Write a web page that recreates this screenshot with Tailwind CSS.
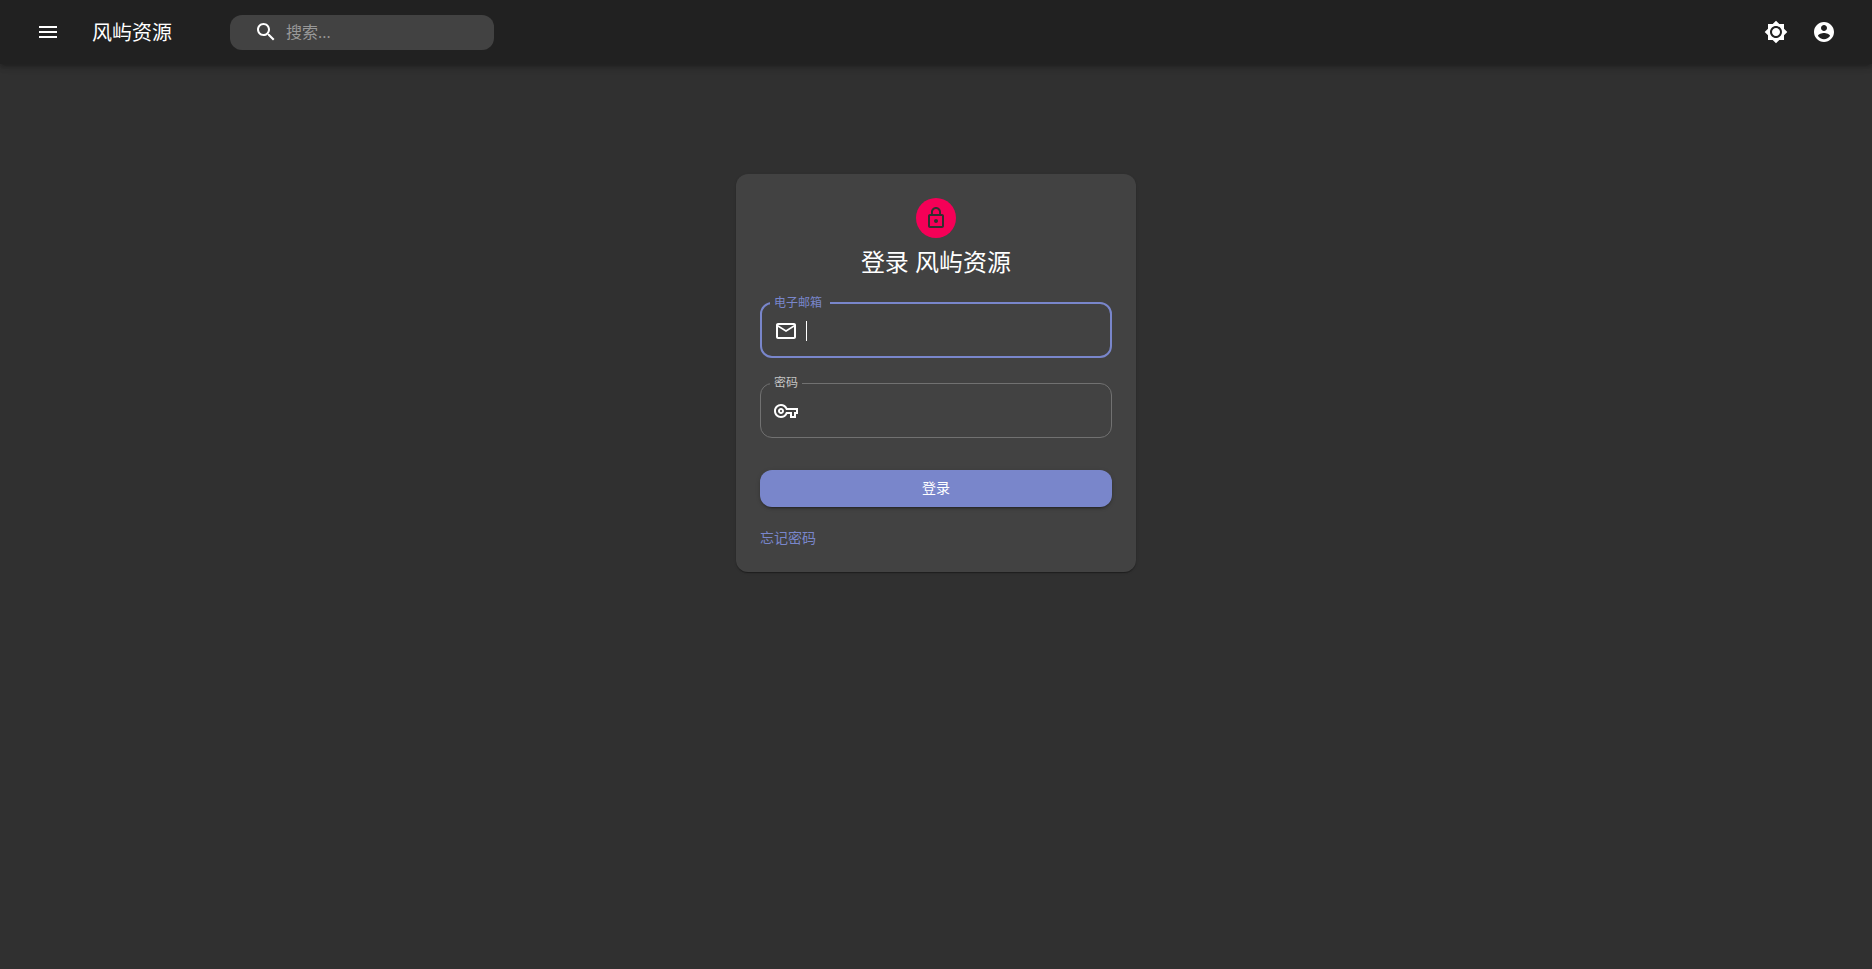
<!DOCTYPE html>
<html lang="zh-CN">
<head>
<meta charset="utf-8">
<meta name="viewport" content="width=device-width, initial-scale=1">
<title>登录 风屿资源</title>
<script src="https://cdn.jsdelivr.net/npm/@tailwindcss/browser@4"></script>
</head>
<body class="min-h-screen bg-[#303030] font-['Open_Sans','Noto_Sans_CJK_SC',sans-serif] text-white">
<header class="flex h-16 items-center bg-[#212121] pl-6 pr-6 shadow-[0_2px_4px_-1px_rgba(0,0,0,0.2),0_4px_5px_0_rgba(0,0,0,0.14),0_1px_10px_0_rgba(0,0,0,0.12)]">
  <button type="button" aria-label="菜单" class="p-3">
    <svg class="size-6 fill-current" viewBox="0 0 24 24"><path d="M3 18h18v-2H3v2zm0-5h18v-2H3v2zm0-7v2h18V6H3z"/></svg>
  </button>
  <h1 class="ml-5 pt-0.5 text-xl leading-8">风屿资源</h1>
  <label class="ml-[58px] flex h-[35px] w-[264px] items-center gap-2 rounded-xl bg-[#424242] pl-6 pr-2">
    <svg class="size-6 shrink-0 fill-current" viewBox="0 0 24 24"><path d="M15.5 14h-.79l-.28-.27C15.41 12.59 16 11.11 16 9.5 16 5.91 13.09 3 9.5 3S3 5.91 3 9.5 5.91 16 9.5 16c1.61 0 3.09-.59 4.23-1.57l.27.28v.79l5 4.99L20.49 19l-4.99-5zm-6 0C7.01 14 5 11.99 5 9.5S7.01 5 9.5 5 14 7.01 14 9.5 11.99 14 9.5 14z"/></svg>
    <input type="search" aria-label="搜索" placeholder="搜索..." class="min-w-0 flex-1 bg-transparent text-base leading-6 outline-none placeholder:text-[#999]">
  </label>
  <div class="ml-auto flex">
    <button type="button" aria-label="切换主题" class="p-3">
      <svg class="size-6 fill-current" viewBox="0 0 24 24"><path d="M20 8.69V4h-4.69L12 .69 8.69 4H4v4.69L.69 12 4 15.31V20h4.69L12 23.31 15.31 20H20v-4.69L23.31 12 20 8.69zM12 18c-3.31 0-6-2.69-6-6s2.69-6 6-6 6 2.69 6 6-2.69 6-6 6zm0-10c-2.21 0-4 1.79-4 4s1.79 4 4 4 4-1.79 4-4-1.79-4-4-4z"/></svg>
    </button>
    <button type="button" aria-label="账户" class="p-3">
      <svg class="size-6 fill-current" viewBox="0 0 24 24"><path d="M12 2C6.48 2 2 6.48 2 12s4.480 10 10 10 10-4.480 10-10S17.520 2 12 2zm0 3c1.660 0 3 1.340 3 3s-1.340 3-3 3-3-1.340-3-3 1.340-3 3-3zm0 14.200c-2.500 0-4.710-1.280-6-3.220.03-1.990 4-3.080 6-3.080 1.990 0 5.970 1.090 6 3.080-1.290 1.940-3.500 3.220-6 3.220z"/></svg>
    </button>
  </div>
</header>
<main class="px-4 pt-[110px] pb-6">
  <section class="mx-auto flex max-w-[400px] flex-col items-center rounded-xl bg-[#424242] p-6 shadow-[0_2px_1px_-1px_rgba(0,0,0,0.2),0_1px_1px_0_rgba(0,0,0,0.14),0_1px_3px_0_rgba(0,0,0,0.12)]">
    <div class="flex size-10 items-center justify-center rounded-full bg-[#f50057] text-[#303030]">
      <svg class="size-6 fill-current" viewBox="0 0 24 24"><path d="M12 17c1.100 0 2-.9 2-2s-.9-2-2-2-2 .9-2 2 .9 2 2 2zm6-9h-1V6c0-2.760-2.240-5-5-5S7 3.240 7 6v2H6c-1.100 0-2 .9-2 2v10c0 1.100.9 2 2 2h12c1.100 0 2-.9 2-2V10c0-1.100-.9-2-2-2zM8.900 6c0-1.710 1.390-3.100 3.100-3.100s3.100 1.390 3.100 3.100v2H8.900V6zM18 20H6V10h12v10z"/></svg>
    </div>
    <h2 class="mt-2 text-2xl leading-8">登录 风屿资源</h2>
    <form class="mt-[19px] w-full">
      <fieldset class="h-[61px] rounded-xl border-2 border-[#7986cb] px-2">
        <legend class="h-3 pl-1 pr-2 text-xs leading-3 text-[#7986cb]"><label for="email">电子邮箱</label></legend>
        <div class="flex h-11 items-center gap-2 pl-1">
          <svg class="size-6 shrink-0 fill-current" viewBox="0 0 24 24"><path d="M22 6c0-1.100-.9-2-2-2H4c-1.100 0-2 .9-2 2v12c0 1.100.9 2 2 2h16c1.100 0 2-.9 2-2V6zm-2 0l-8 5-8-5h16zm0 12H4V8l8 5 8-5v10z"/></svg>
          <span class="h-5 w-px bg-white"></span>
          <input id="email" type="email" class="min-w-0 flex-1 bg-transparent text-base leading-6 outline-none">
        </div>
      </fieldset>
      <fieldset class="mt-[19px] h-[61px] rounded-xl border border-[#717171] px-[9px]">
        <legend class="h-3 px-1 text-xs leading-3 text-[#c6c6c6]"><label for="password">密码</label></legend>
        <div class="flex h-11 items-center gap-2 pl-1">
          <svg class="size-6 shrink-0 fill-current" viewBox="0 0 24 24"><path d="M22 19h-6v-4h-2.680c-1.140 2.420-3.600 4-6.320 4-3.860 0-7-3.140-7-7s3.140-7 7-7c2.720 0 5.170 1.580 6.320 4H24v6h-2v4zm-4-2h2v-4h2v-2H11.940l-.23-.67C11.010 8.340 9.110 7 7 7c-2.760 0-5 2.240-5 5s2.240 5 5 5c2.110 0 4.010-1.340 4.710-3.330l.23-.67H18v4zM7 15c-1.650 0-3-1.350-3-3s1.350-3 3-3 3 1.350 3 3-1.350 3-3 3zm0-4c-.55 0-1 .45-1 1s.45 1 1 1 1-.45 1-1-.45-1-1-1z"/></svg>
          <input id="password" type="password" class="min-w-0 flex-1 bg-transparent text-base leading-6 outline-none">
        </div>
      </fieldset>
      <button type="submit" class="mt-8 block h-[37px] w-full rounded-xl bg-[#7986cb] pb-0.5 text-sm shadow-[0_3px_1px_-2px_rgba(0,0,0,0.2),0_2px_2px_0_rgba(0,0,0,0.14),0_1px_5px_0_rgba(0,0,0,0.12)]">登录</button>
    </form>
    <a href="#" class="mt-[21px] self-start text-sm leading-5 text-[#7986cb]">忘记密码</a>
  </section>
</main>
</body>
</html>
